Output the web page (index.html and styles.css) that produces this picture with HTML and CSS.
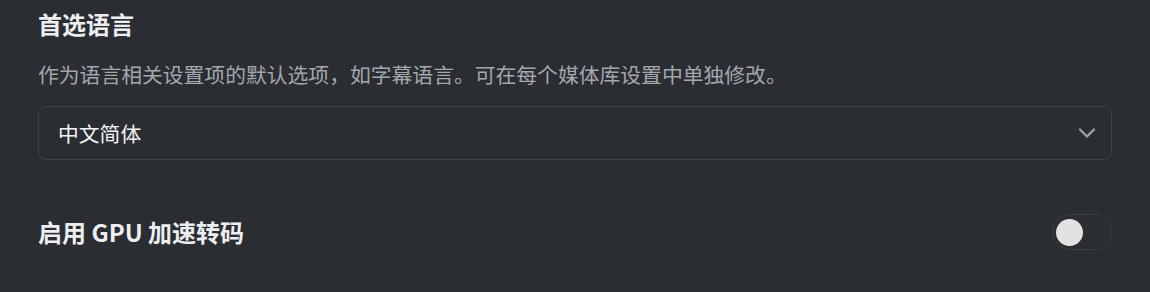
FILE: index.html
```html
<!DOCTYPE html>
<html lang="zh-CN">
<head>
<meta charset="utf-8">
<title>设置</title>
<link rel="stylesheet" href="styles.css">
</head>
<body>
<main class="settings">
  <section class="setting">
    <h2 class="setting-title">首选语言</h2>
    <p class="setting-desc">作为语言相关设置项的默认选项，如字幕语言。可在每个媒体库设置中单独修改。</p>
    <div class="select">
      <span class="select-value">中文简体</span>
      <svg class="chevron" width="18" height="12" viewBox="0 0 18 12"><path d="M2 2.5 L9 9.5 L16 2.5" fill="none" stroke="#9aa0a8" stroke-width="2.4" stroke-linecap="round" stroke-linejoin="round"/></svg>
    </div>
  </section>
  <section class="setting-row">
    <h2 class="setting-title">启用 GPU 加速转码</h2>
    <div class="toggle"><span class="knob"></span></div>
  </section>
</main>
</body>
</html>
```
FILE: styles.css
```css
html, body {
  margin: 0;
  padding: 0;
  background: #2a2d32;
}
body {
  font-family: "Noto Sans CJK SC", "Noto Sans", sans-serif;
  color: #e6e7e9;
}
.settings {
  padding: 8px 38px 0 38px;
}
.setting-title {
  margin: 0;
  font-size: 24px;
  line-height: 32px;
  font-weight: 700;
  color: #eceef0;
}
.setting-desc {
  margin: 19px 0 0 0;
  font-size: 20.8px;
  line-height: 30px;
  color: #a3a7ae;
}
.select {
  margin-top: 17px;
  height: 52px;
  border: 1px solid #3e4249;
  border-radius: 8px;
  display: flex;
  align-items: center;
  justify-content: space-between;
  padding: 0 15px 0 19px;
}
.select-value {
  font-size: 20.8px;
  color: #f2f3f4;
}
.chevron {
  display: block;
}
.setting-row {
  margin-top: 54px;
  display: flex;
  align-items: center;
  justify-content: space-between;
  height: 36px;
}
.toggle {
  width: 55px;
  height: 34px;
  border: 1px solid #3b3f46;
  border-radius: 18px;
  display: flex;
  align-items: center;
  padding-left: 3px;
  box-sizing: content-box;
}
.knob {
  width: 27px;
  height: 27px;
  border-radius: 50%;
  background: #e2e2e3;
}
```
